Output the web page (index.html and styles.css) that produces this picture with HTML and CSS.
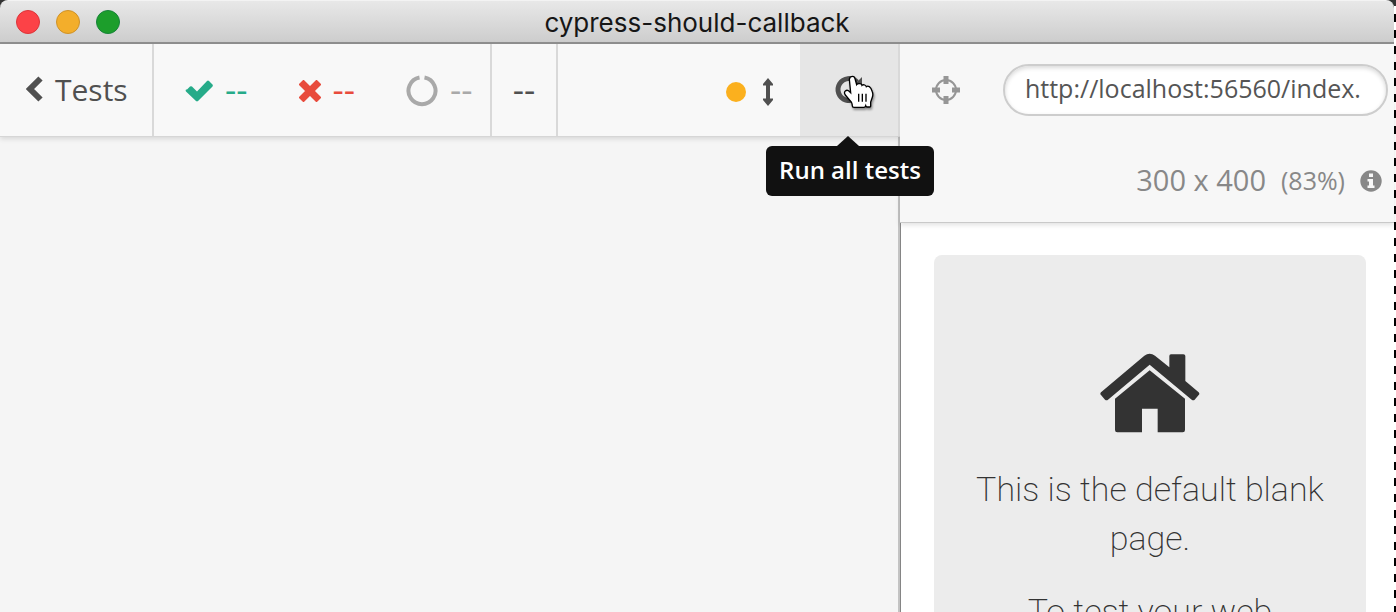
FILE: index.html
```html
<!DOCTYPE html>
<html lang="en">
<head>
<meta charset="utf-8">
<title>cypress-should-callback</title>
<link rel="stylesheet" href="styles.css">
</head>
<body>
<div class="window">
  <header class="titlebar">
    <div class="lights">
      <span class="light light-close"></span>
      <span class="light light-min"></span>
      <span class="light light-zoom"></span>
    </div>
    <h1 class="title">cypress-should-callback</h1>
  </header>
  <main class="panes">
    <section class="reporter">
      <nav class="toolbar">
        <a class="back" href="#">
          <svg width="18" height="26" viewBox="0 0 18 26"><path d="M14.500 2.500 4 13l10.500 10.500" fill="none" stroke="#505050" stroke-width="6"/></svg>
          Tests
        </a>
        <ul class="stats">
          <li class="stat passed"><svg width="28" height="22" viewBox="0 0 28 22"><path d="M2 9.500 5 6.500q1-.7 2 0l5 5L22 1q1-1 2 0l3.500 3.500q.7 1 0 2L13 21q-1 .8-2 0L1 11.500q-.7-1 0-2z" fill="#26ab89"/></svg><span>--</span></li>
          <li class="stat failed"><svg width="22" height="22" viewBox="0 0 22 22"><path d="M4.500 4.500l13 13M17.500 4.500l-13 13" stroke="#e84b3c" stroke-width="7" stroke-linecap="square"/></svg><span>--</span></li>
          <li class="stat pending"><svg width="32" height="32" viewBox="0 0 32 32"><path d="M18.500 2.500a13.500 13.500 0 1 1-5 0" fill="none" stroke="#a9a9a9" stroke-width="4"/></svg><span>--</span></li>
        </ul>
        <div class="duration">--</div>
        <div class="controls">
          <span class="dot"></span>
          <svg width="12" height="28" viewBox="0 0 12 28"><path d="M6 0 11 6v1.500H8v13h3V22l-5 6-5-6v-1.500h3v-13H1V6z" fill="#505050"/></svg>
        </div>
        <div class="run-wrap">
          <button class="run" aria-label="Run all tests">
            <svg width="30" height="30" viewBox="0 0 30 30"><path d="M23 7a11 11 0 1 0 3 8" fill="none" stroke="#505050" stroke-width="5"/><path d="M28 2v11H17z" fill="#505050"/></svg>
          </button>
          <div class="tooltip" role="tooltip">Run all tests</div>
          <svg class="cursor" width="34" height="36" viewBox="70 46 102 108"><path d="M99 50q6 0 7 7l5 18q3-4 9-3 6 0 7 5 3-3 8-1 4 2 5 5 4-3 9 0 5 3 9 15 3 8 0 17l-5 14v13q0 2-3 2h-8q-3 0-4-4-2 5-5 5H103q-5 0-5-4 0-6-3-12L77 106q-5-8 0-12 6-5 13 2l3 3-4-40q1-9 10-9z" fill="#fff" stroke="#000" stroke-width="4"/><path d="M117 102v24M128 102v24M139 102v24" stroke="#000" stroke-width="4"/></svg>
        </div>
      </nav>
    </section>
    <section class="preview">
      <div class="preview-head">
        <div class="url-row">
          <button class="picker" aria-label="Selector playground">
            <svg width="30" height="30" viewBox="0 0 30 30"><circle cx="15" cy="15" r="10" fill="none" stroke="#969696" stroke-width="2"/><path d="M15 1v8M15 21v8M1 15h8M21 15h8" stroke="#969696" stroke-width="5" stroke-linecap="butt"/></svg>
          </button>
          <input class="url" type="text" aria-label="Address" value="http://localhost:56560/index." readonly>
        </div>
        <div class="viewport">
          <span class="size">300 x 400</span>
          <span class="scale">(83%)</span>
          <svg width="22" height="22" viewBox="0 0 22 22"><circle cx="11" cy="11" r="10.700" fill="#888"/><path d="M9 3.500h4v3.500H9zM7.500 9H13v6.500h1.500V18h-7v-2.500H9v-4H7.500z" fill="#f7f7f7"/></svg>
        </div>
      </div>
      <div class="stage">
        <article class="blank">
          <svg class="home" width="100" height="80" viewBox="59 38 300 240"><path d="M62 156 192 46q16-12 32 0l43 35V47q0-5 5-5h37q6 0 6 5v75l40 34q4 4 0 8l-12 14q-4 4-9 0L208 73 83 178q-4 4-9 0L62 164q-4-4 0-8zM208 90l106 85v94q0 7-7 7h-75v-71h-47v71h-74q-7 0-7-7v-94z" fill="#333"/></svg>
          <p>This is the default blank page.</p>
          <p>To test your web application:</p>
        </article>
      </div>
    </section>
  </main>
</div>
</body>
</html>
```
FILE: styles.css
```css
* { box-sizing: border-box; }
body {
  margin: 0;
  height: 100vh;
  overflow: hidden;
  background: #333;
  color: #505050;
  font-family: "Open Sans", "Noto Sans", sans-serif;
}
svg { display: block; flex: none; }
button { border: 0; padding: 0; background: none; }
.window {
  display: flex;
  flex-direction: column;
  height: 100%;
  padding-right: 2px;
  background: #333 repeating-linear-gradient(#fff 0 8px, #000 8px 16px) right 0 top 6px / 2px 100% no-repeat;
}
.titlebar {
  display: grid;
  grid-template-columns: 1fr auto 1fr;
  align-items: center;
  height: 44px;
  padding: 0 16px;
  border-top: 1px solid #f3f3f3;
  border-bottom: 2px solid #909090;
  border-radius: 8px 8px 0 0;
  background: linear-gradient(#e8e8e8, #cdcdcd);
}
.lights { display: flex; gap: 16px; }
.light { width: 24px; height: 24px; border: 1px solid; border-radius: 50%; }
.light-close { background: #fc4247; border-color: #dc3439; }
.light-min { background: #f3ae2b; border-color: #cf9228; }
.light-zoom { background: #1c9e2b; border-color: #178339; }
.title { margin: 0; padding-top: 2px; color: #161616; font: 400 26px/38px Inter, sans-serif; }
.panes { display: flex; flex: 1; min-height: 0; background: #fff; }
.reporter {
  width: 64.56%;
  border-right: 2px solid #c3c3c3;
  background: #f5f5f5;
}
.toolbar {
  display: flex;
  height: 93px;
  margin-right: -2px;
  border-bottom: 1px solid #d6d6d6;
  background: #f8f8f8;
  box-shadow: 0 2px 5px rgba(0, 0, 0, .12);
}
.back {
  display: flex;
  align-items: center;
  gap: 11px;
  width: 154px;
  padding: 0 0 2px 26px;
  border-right: 2px solid #d9d9d9;
  color: #505050;
  font-size: 30px;
  text-decoration: none;
}
.stats {
  display: flex;
  align-items: center;
  gap: 51px;
  width: 338px;
  margin: 0;
  padding: 2px 0 0 31px;
  border-right: 2px solid #d9d9d9;
  list-style: none;
}
.stat { display: flex; align-items: center; gap: 12px; font-size: 35px; line-height: 30px; }
.stat span, .duration { padding-bottom: 4px; }
.passed { color: #26ab89; }
.failed { color: #e84b3c; }
.pending { color: #a9a9a9; }
.duration {
  display: flex;
  align-items: center;
  justify-content: center;
  width: 66px;
  border-right: 2px solid #d9d9d9;
  font-size: 35px;
}
.controls {
  display: flex;
  flex: 1;
  align-items: center;
  justify-content: flex-end;
  gap: 16px;
  padding: 4px 26px 0 0;
}
.dot { width: 20px; height: 20px; border-radius: 50%; background: #fbb01e; }
.run-wrap { position: relative; display: flex; width: 100px; }
.run {
  display: flex;
  flex: 1;
  align-items: center;
  justify-content: center;
  border-right: 2px solid #d9d9d9;
  background: #e6e6e6;
}
.tooltip {
  position: absolute;
  z-index: 2;
  top: 102px;
  left: -34px;
  width: 168px;
  height: 50px;
  border-radius: 6px;
  background: #111;
  color: #fff;
  font-size: 24px;
  font-weight: 600;
  line-height: 48px;
  text-align: center;
  white-space: nowrap;
}
.tooltip::before {
  content: "";
  position: absolute;
  top: -10px;
  left: 71px;
  border: 11px solid transparent;
  border-top: 0;
  border-bottom: 10px solid #111;
}
.cursor { position: absolute; top: 31px; left: 43px; filter: drop-shadow(1px 2px 1px rgba(0, 0, 0, .4)); }
.preview { display: flex; flex: 1; flex-direction: column; min-width: 0; }
.preview-head {
  height: 179px;
  border-bottom: 1px solid #c9c9c9;
  background: #f7f7f7;
  box-shadow: 0 2px 5px rgba(0, 0, 0, .12);
}
.url-row { display: flex; align-items: center; gap: 42px; height: 92px; padding: 0 6px 0 31px; }
.url {
  flex: 1;
  min-width: 0;
  height: 52px;
  padding: 0 20px 4px;
  border: 2px solid #cdcdcd;
  border-radius: 26px;
  background: #fff;
  box-shadow: inset 0 2px 4px rgba(0, 0, 0, .15);
  color: #555;
  font: 25px "Open Sans", sans-serif;
}
.viewport {
  display: flex;
  align-items: center;
  justify-content: flex-end;
  gap: 15px;
  height: 90px;
  padding-right: 12px;
  color: #888;
}
.size { padding-bottom: 4px; font-size: 29px; }
.scale { padding-bottom: 2px; font-size: 25px; }
.stage { display: flex; flex: 1; min-height: 0; padding: 32px 28px 0 33px; border-left: 1px solid #858585; }
.blank {
  flex: 1;
  padding: 98px 32px 0;
  border-radius: 8px 8px 0 0;
  background: #ececec;
  color: #333;
  font: 200 34px/49px Roboto, sans-serif;
  text-align: center;
}
.home { margin: 0 auto 32px; }
.blank p { margin: 0 0 24px; }
```
